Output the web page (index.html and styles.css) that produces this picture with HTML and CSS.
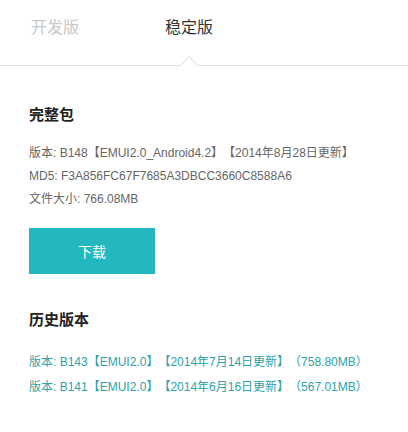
FILE: index.html
```html
<!DOCTYPE html>
<html lang="zh-CN">
<head>
<meta charset="utf-8">
<link rel="stylesheet" href="styles.css">
</head>
<body>
<div class="tabs">
  <div class="tab">开发版</div>
  <div class="tab active">稳定版<span class="caret"></span></div>
</div>
<div class="content">
  <h2 class="title">完整包</h2>
  <ul class="info">
    <li>版本: B148【EMUI2.0_Android4.2】【2014年8月28日更新】</li>
    <li>MD5: F3A856FC67F7685A3DBCC3660C8588A6</li>
    <li>文件大小: 766.08MB</li>
  </ul>
  <a class="btn">下载</a>
  <h2 class="title title-history">历史版本</h2>
  <ul class="history">
    <li><a>版本: B143【EMUI2.0】【2014年7月14日更新】（758.80MB）</a></li>
    <li><a>版本: B141【EMUI2.0】【2014年6月16日更新】（567.01MB）</a></li>
  </ul>
</div>
</body>
</html>
```

FILE: styles.css
```css
html, body {
  margin: 0;
  padding: 0;
  background: #fff;
}
body {
  width: 408px;
  height: 432px;
  overflow: hidden;
  font-family: "Liberation Sans", Arial, "Noto Sans CJK SC", sans-serif;
  color: #333;
  text-spacing-trim: space-all;
}
.tabs {
  display: flex;
  height: 65px;
  border-bottom: 1px solid #e3e3e3;
  padding-left: 31px;
  gap: 86px;
}
.tab {
  position: relative;
  font-size: 16px;
  line-height: 20px;
  padding-top: 18px;
  color: #c8c8c8;
}
.tab.active {
  color: #333;
}
.caret {
  position: absolute;
  left: 50%;
  bottom: -8px;
  width: 14px;
  height: 14px;
  margin-left: -7px;
  background: #fff;
  border-top: 1px solid #e3e3e3;
  border-left: 1px solid #e3e3e3;
  transform: rotate(45deg);
  box-sizing: border-box;
}
.content {
  padding: 39px 0 0 29px;
}
.title {
  margin: 0;
  font-size: 15px;
  line-height: 20px;
  font-weight: bold;
  color: #222;
}
.info, .history {
  list-style: none;
  margin: 0;
  padding: 0;
  font-size: 12px;
  line-height: 23px;
}
.info {
  margin-top: 17px;
  color: #666;
}
.btn {
  display: flex;
  align-items: center;
  justify-content: center;
  width: 126px;
  height: 46px;
  margin-top: 17px;
  background: #22b8be;
  color: #fff;
  font-size: 14px;
}
.title-history {
  margin-top: 36px;
}
.history {
  margin-top: 20px;
  line-height: 25px;
}
.history a {
  color: #2ea2a9;
}
```
